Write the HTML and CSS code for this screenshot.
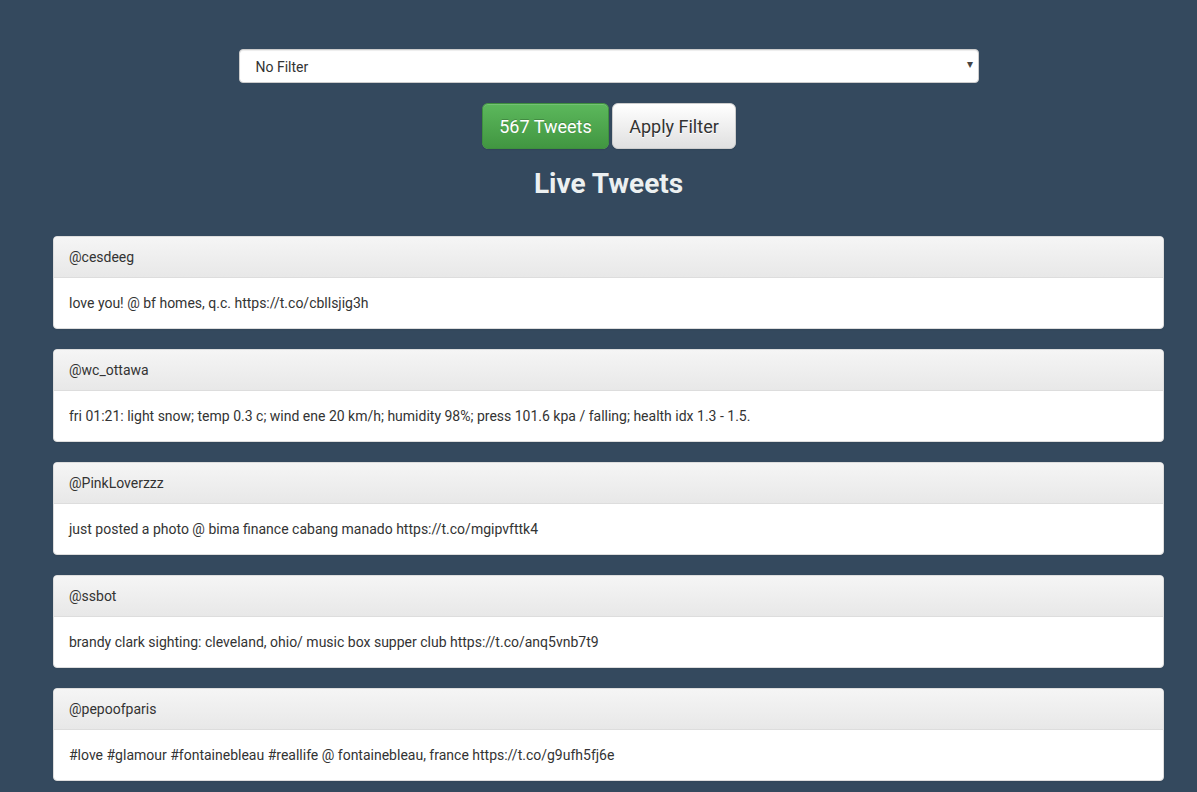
FILE: index.html
```html
<!DOCTYPE html>
<html>
<head>
<meta charset="utf-8">
<link rel="stylesheet" href="styles.css">
</head>
<body>
<div class="page">
  <div class="filter-row">
    <div class="select-wrap">
      <select class="filter-select">
        <option>No Filter</option>
      </select>
      <span class="select-arrow">▾</span>
    </div>
  </div>
  <div class="btn-row">
    <button class="btn btn-success">567 Tweets</button>
    <button class="btn btn-default">Apply Filter</button>
  </div>
  <h2 class="title">Live Tweets</h2>
  <div class="tweets">
    <div class="panel">
      <div class="panel-heading">@cesdeeg</div>
      <div class="panel-body">love you! @ bf homes, q.c. https://t.co/cbllsjig3h</div>
    </div>
    <div class="panel">
      <div class="panel-heading">@wc_ottawa</div>
      <div class="panel-body">fri 01:21: light snow; temp 0.3 c; wind ene 20 km/h; humidity 98%; press 101.6 kpa / falling; health idx 1.3 - 1.5.</div>
    </div>
    <div class="panel">
      <div class="panel-heading">@PinkLoverzzz</div>
      <div class="panel-body">just posted a photo @ bima finance cabang manado https://t.co/mgipvfttk4</div>
    </div>
    <div class="panel">
      <div class="panel-heading">@ssbot</div>
      <div class="panel-body">brandy clark sighting: cleveland, ohio/ music box supper club https://t.co/anq5vnb7t9</div>
    </div>
    <div class="panel">
      <div class="panel-heading">@pepoofparis</div>
      <div class="panel-body">#love #glamour #fontainebleau #reallife @ fontainebleau, france https://t.co/g9ufh5fj6e</div>
    </div>
  </div>
</div>
</body>
</html>
```
FILE: styles.css
```css
html, body {
  margin: 0;
  padding: 0;
}
body {
  background: #34495e;
  font-family: Roboto, "Liberation Sans", sans-serif;
  font-size: 14px;
  line-height: 1.42857;
  color: #333;
  overflow: hidden;
}
.page {
  padding: 49px 33px 0 53px;
}
.filter-row {
  display: flex;
  justify-content: center;
}
.select-wrap {
  position: relative;
  width: 740px;
}
.filter-select {
  display: block;
  width: 100%;
  height: 34px;
  -webkit-appearance: none;
  appearance: none;
  background: #fff;
  border: 1px solid #ccc;
  border-radius: 4px;
  padding: 2px 16px 0;
  font-family: Roboto, "Liberation Sans", sans-serif;
  font-size: 14px;
  color: #333;
  box-shadow: inset 0 1px 1px rgba(0,0,0,.075);
}
.select-arrow {
  position: absolute;
  right: 6px;
  top: 7px;
  font-size: 12px;
  color: #444;
  pointer-events: none;
}
.btn-row {
  display: flex;
  justify-content: center;
  gap: 3px;
  margin-top: 20px;
  padding-left: 1px;
}
.btn {
  font-family: Roboto, "Liberation Sans", sans-serif;
  font-size: 18px;
  line-height: 24px;
  padding: 11px 16px 9px;
  border-radius: 6px;
  border: 1px solid transparent;
  box-shadow: inset 0 1px 0 rgba(255,255,255,.15), 0 1px 1px rgba(0,0,0,.075);
}
.btn-success {
  color: #fff;
  background-image: linear-gradient(to bottom, #5cb85c 0, #419641 100%);
  border-color: #3e8f3e;
  text-shadow: 0 -1px 0 rgba(0,0,0,.2);
  width: 127px;
}
.btn-default {
  color: #333;
  background-image: linear-gradient(to bottom, #fff 0, #e0e0e0 100%);
  border-color: #ccc;
  text-shadow: 0 1px 0 #fff;
  width: 124px;
}
.title {
  text-align: center;
  color: #ecf0f1;
  font-size: 28px;
  font-weight: 700;
  line-height: 34px;
  margin: 18px 0 35px;
}
.panel {
  background: #fff;
  border: 1px solid #ddd;
  border-radius: 4px;
  margin-bottom: 20px;
  box-shadow: 0 1px 2px rgba(0,0,0,.05);
  overflow: hidden;
}
.panel-heading {
  padding: 11px 15px 9px;
  background-image: linear-gradient(to bottom, #f5f5f5 0, #e8e8e8 100%);
  border-bottom: 1px solid #ddd;
  color: #333;
}
.panel-body {
  padding: 16px 15px 14px;
}
```
